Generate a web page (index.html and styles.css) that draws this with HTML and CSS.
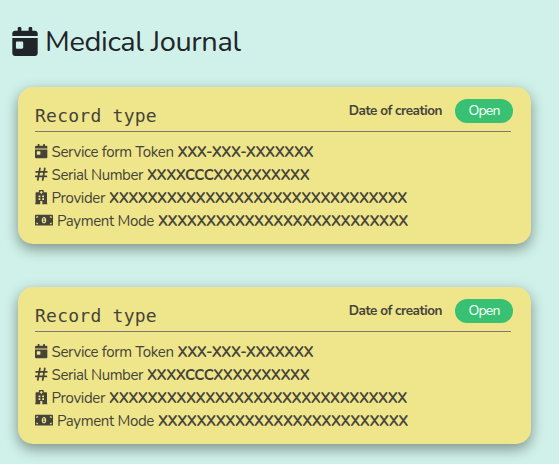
FILE: index.html
```html
<!DOCTYPE html>
<html lang="en">
<head>
<meta charset="utf-8">
<title>Medical Journal</title>
<link rel="stylesheet" href="styles.css">
</head>
<body>
<svg class="sprite" aria-hidden="true">
  <symbol id="calendar" viewBox="0 0 448 512"><path d="M0 464c0 26.500 21.500 48 48 48h352c26.500 0 48-21.500 48-48V192H0v272zm64-192c0-8.800 7.200-16 16-16h96c8.800 0 16 7.200 16 16v96c0 8.800-7.200 16-16 16H80c-8.800 0-16-7.200-16-16v-96zM400 64h-48V16c0-8.800-7.200-16-16-16h-32c-8.800 0-16 7.200-16 16v48H160V16c0-8.800-7.200-16-16-16h-32c-8.800 0-16 7.200-16 16v48H48C21.500 64 0 85.500 0 112v48h448v-48c0-26.500-21.500-48-48-48z"/></symbol>
  <symbol id="hash" viewBox="0 0 448 512"><path d="M174 50l-74 412M348 50l-74 412M40 176h390M18 336h390" fill="none" stroke="currentColor" stroke-width="62" stroke-linecap="round"/></symbol>
  <symbol id="hospital" viewBox="0 0 448 512"><path fill-rule="evenodd" d="M0 512v-36h20V108c0-13 12-24 24-24h92V24c0-13 11-24 24-24h128c13 0 24 11 24 24v60h92c13 0 24 11 24 24v368h20v36H260V404c0-7-5-12-12-12h-48c-7 0-12 5-12 12v108zM204 36v30h-30v34h30v30h40v-30h30V66h-30V36zM128 192v64h64v-64zm128 0v64h64v-64zM128 296v64h64v-64zm128 0v64h64v-64z"/></symbol>
  <symbol id="money" viewBox="0 0 640 512"><path fill-rule="evenodd" d="M32 64h576c18 0 32 14 32 32v320c0 18-14 32-32 32H32c-18 0-32-14-32-32V96c0-18 14-32 32-32zM48 400h64c0-35-29-64-64-64zm0-224c35 0 64-29 64-64H48zm272 192c44 0 80-50 80-112s-36-112-80-112-80 50-80 112 36 112 80 112zm272 32v-64c-35 0-64 29-64 64zm0-224v-64h-64c0 35 29 64 64 64zM302 186h32v108h16v28h-60v-28h16v-68h-16v-24z"/></symbol>
</svg>
<h1 class="title"><svg class="icon"><use href="#calendar"/></svg><span>Medical Journal</span></h1>
<main class="records">
  <article class="card">
    <header class="card-head"><h2>Record type</h2><span class="date">Date of creation</span><span class="badge">Open</span></header>
    <ul class="fields">
      <li class="token"><svg class="icon"><use href="#calendar"/></svg><span>Service form Token</span><b>XXX-XXX-XXXXXXX</b></li>
      <li class="serial"><svg class="icon"><use href="#hash"/></svg><span>Serial Number</span><b>XXXXCCCXXXXXXXXXX</b></li>
      <li class="provider"><svg class="icon"><use href="#hospital"/></svg><span>Provider</span><b>XXXXXXXXXXXXXXXXXXXXXXXXXXXXXXX</b></li>
      <li class="payment"><svg class="icon wide"><use href="#money"/></svg><span>Payment Mode</span><b>XXXXXXXXXXXXXXXXXXXXXXXXXX</b></li>
    </ul>
  </article>
  <article class="card">
    <header class="card-head"><h2>Record type</h2><span class="date">Date of creation</span><span class="badge">Open</span></header>
    <ul class="fields">
      <li class="token"><svg class="icon"><use href="#calendar"/></svg><span>Service form Token</span><b>XXX-XXX-XXXXXXX</b></li>
      <li class="serial"><svg class="icon"><use href="#hash"/></svg><span>Serial Number</span><b>XXXXCCCXXXXXXXXXX</b></li>
      <li class="provider"><svg class="icon"><use href="#hospital"/></svg><span>Provider</span><b>XXXXXXXXXXXXXXXXXXXXXXXXXXXXXXX</b></li>
      <li class="payment"><svg class="icon wide"><use href="#money"/></svg><span>Payment Mode</span><b>XXXXXXXXXXXXXXXXXXXXXXXXXX</b></li>
    </ul>
  </article>
</main>
</body>
</html>
```
FILE: styles.css
```css
* { box-sizing: border-box; }
body {
  margin: 0;
  height: 464px;
  overflow: hidden;
  background: #d0f1e9;
  color: #212529;
  font-family: Nunito, Lato, sans-serif;
  font-size: 15px;
}
.sprite { display: none; }
.icon { display: block; flex: none; width: 12.6px; height: 14.4px; fill: currentColor; }
.title {
  display: flex;
  align-items: center;
  gap: 7px;
  height: 87px;
  margin: 0;
  padding: 0 12px 4px;
  font-size: 29px;
  font-weight: 400;
  letter-spacing: -.37px;
}
.title .icon { width: 26px; height: 29px; }
.records { display: grid; gap: 43px; padding: 0 28px 0 18px; }
.card {
  height: 157px;
  padding: 11px 20px 0 17px;
  border-radius: 15px;
  background: #efe68b;
  color: #46443a;
  box-shadow: 0 5px 14px rgba(0, 0, 0, .4);
}
.card-head {
  display: flex;
  align-items: center;
  height: 34px;
  padding-bottom: 7px;
  border-bottom: 1px solid #7f7876;
  margin-bottom: 8px;
}
h2 {
  margin: 9px auto 0 0;
  font: 400 18px/24px Consolas, "DejaVu Sans Mono", monospace;
  letter-spacing: .25px;
}
.date { font-size: 13.500px; font-weight: 700; letter-spacing: -.47px; margin: 0 13px 2px 0; white-space: nowrap; }
.badge {
  width: 58px;
  height: 24px;
  margin-right: -2px;
  border-radius: 12px;
  background: #38c172;
  color: #fff;
  font-size: 14px;
  letter-spacing: -.8px;
  line-height: 24px;
  text-align: center;
}
.fields { margin: 0; padding: 0; list-style: none; }
.fields li { display: flex; align-items: center; gap: 4px; height: 23px; letter-spacing: -.34px; white-space: nowrap; }
.fields b { letter-spacing: -.47px; }
.fields .serial { letter-spacing: -.42px; }
.fields .wide { width: 18px; }
```
